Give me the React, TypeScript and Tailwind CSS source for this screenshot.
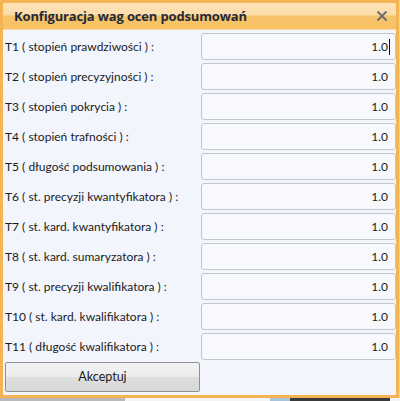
import React from "react";

const rows = [
  "T1 ( stopień prawdziwości ) :",
  "T2 ( stopień precyzyjności ) :",
  "T3 ( stopień pokrycia ) :",
  "T4 ( stopień trafności ) :",
  "T5 ( długość podsumowania ) :",
  "T6 ( st. precyzji kwantyfikatora ) :",
  "T7 ( st. kard. kwantyfikatora ) :",
  "T8 ( st. kard. sumaryzatora ) :",
  "T9 ( st. precyzji kwalifikatora ) :",
  "T10 ( st. kard. kwalifikatora ) :",
  "T11 ( długość kwalifikatora ) :",
];

export default function App() {
  return (
    <div className="w-[400px] h-[401px] bg-[#d9d9d9] flex flex-col overflow-hidden" style={{ fontFamily: 'Lato, "Open Sans", sans-serif' }}>
      <div className="w-[399px] h-[398px] border-[3px] border-[#f4b453] flex flex-col shrink-0">
        <div className="h-[26px] shrink-0 flex items-center justify-between pl-[11px] pr-[6px] bg-[linear-gradient(to_bottom,#fde2b8_0%,#fcdcaa_45%,#f8c46c_50%,#f7c163_100%)]">
          <span className="text-[13px] font-bold text-[#1f2a3a] leading-none tracking-[-0.15px]" style={{ fontFamily: '"Open Sans", sans-serif' }}>Konfiguracja wag ocen podsumowań</span>
          <svg width="12" height="12" viewBox="0 0 12 12" className="mr-[2px]">
            <path d="M1.5 1.5 L10.5 10.5 M10.5 1.5 L1.5 10.5" stroke="#6f6f70" strokeWidth="2" />
          </svg>
        </div>
        <div className="flex-1 bg-[#f2f5fb] border-t border-[#f9d9a6] pt-[3px] pl-[2px] flex flex-col">
          <div className="flex flex-col gap-[3px]">
            {rows.map((r, i) => (
              <div key={i} className="flex items-center h-[27px]">
                <div className="w-[196px] text-[12px] text-[#1b1b1b] leading-none">{r}</div>
                <div className="w-[195px] h-[27px] border border-[#c3c6cc] rounded-[3px] bg-[#f8f9fc] flex items-center justify-end pr-[5px] text-[12px] text-[#1b1b1b]">
                  <span>1.0</span>
                  {i === 0 ? <span className="w-px h-[16px] bg-[#111] ml-[1px]" /> : <span className="w-px ml-[1px]" />}
                </div>
              </div>
            ))}
          </div>
          <button className="mt-[2px] w-[195px] h-[30px] border border-[#8d9199] rounded-[2px] bg-[linear-gradient(to_bottom,#f3f3f3_0%,#ebebeb_50%,#dedede_51%,#d8d8d8_100%)] text-[12.5px] text-[#1b1b1b] flex items-center justify-center">
            Akceptuj
          </button>
        </div>
      </div>
      <div className="h-[3px] w-[400px] flex">
        <div className="w-[125px] bg-[#b9b9b9]" />
        <div className="w-[145px] bg-[#f4f4f4]" />
        <div className="w-[20px] bg-[#a9c3dc]" />
        <div className="w-[100px] bg-[#3a3a3a]" />
        <div className="flex-1 bg-[#f4f4f4]" />
      </div>
    </div>
  );
}
